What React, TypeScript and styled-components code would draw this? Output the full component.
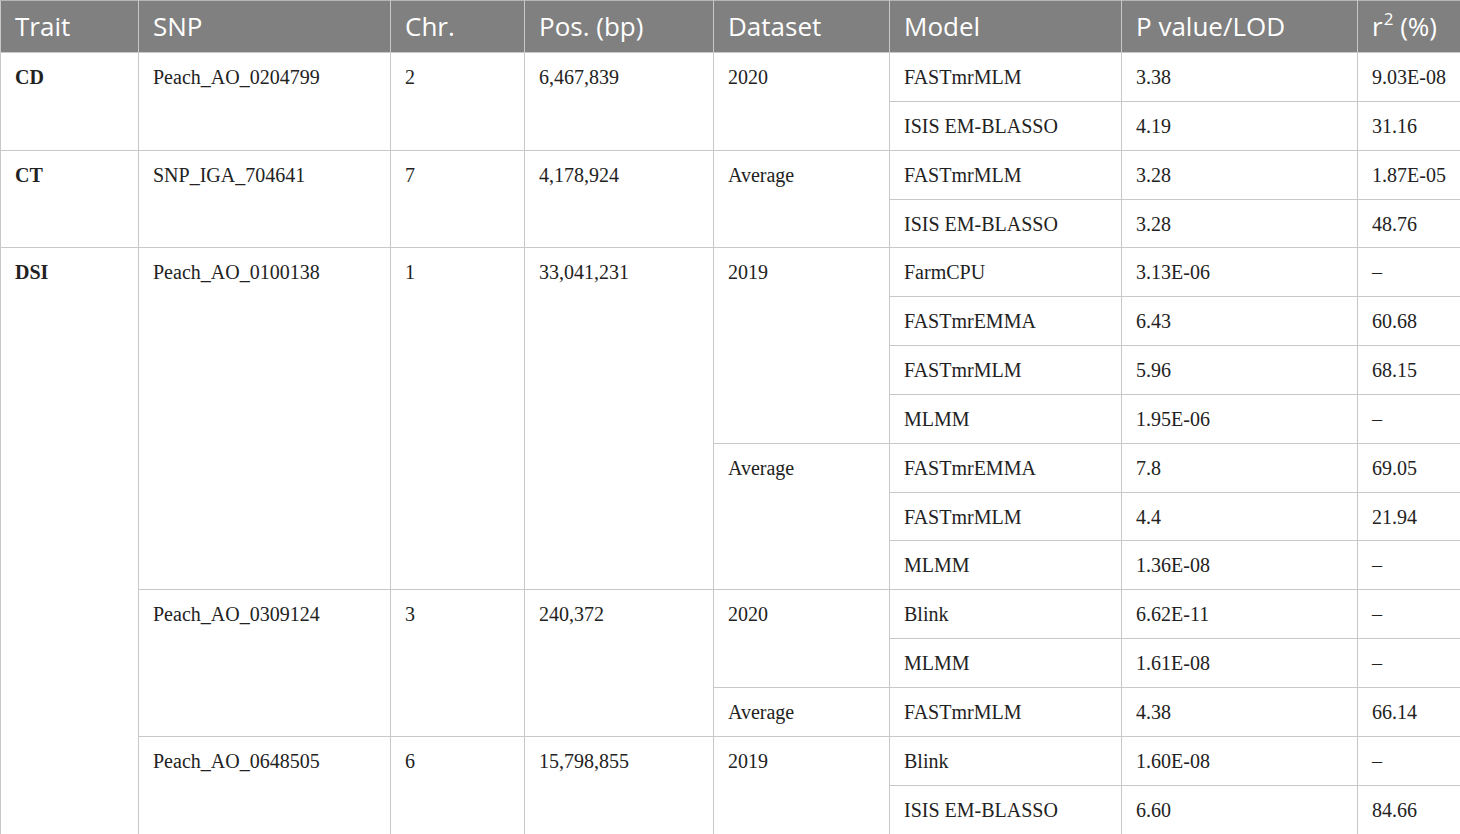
import React from "react";
import styled, { createGlobalStyle } from "styled-components";

const Global = createGlobalStyle`
  html, body { margin: 0; padding: 0; background: #ffffff; }
  #root { width: 1460px; height: 834px; overflow: hidden; }
`;

const Table = styled.table`
  width: 1460px;
  border-collapse: collapse;
  table-layout: fixed;
  font-family: "Liberation Serif", "Times New Roman", serif;
  color: #222;
`;

const HeadRow = styled.tr`
  height: 52px;
  background: #808080;
`;

const HeadCell = styled.th`
  font-family: "Open Sans", "Noto Sans", sans-serif;
  font-weight: 400;
  font-size: 26px;
  color: #ffffff;
  text-align: left;
  padding: 0 0 2px 14px;
  border: 1px solid #c8c8c8;
  border-top-color: #b5b5b5;
  vertical-align: middle;
  white-space: nowrap;
`;

const Sup = styled.sup`
  font-size: 17px;
  vertical-align: 11px;
  line-height: 0;
  margin-left: 1px;
`;

const BodyRow = styled.tr`
  height: 48.85px;
`;

const Cell = styled.td<{ $bold?: boolean }>`
  font-size: 20px;
  font-weight: ${(p) => (p.$bold ? 700 : 400)};
  text-align: left;
  vertical-align: top;
  padding: 12px 0 0 14px;
  border: 1px solid #c8c8c8;
  white-space: nowrap;
  line-height: 24px;
`;

type C = { t: string; rs?: number; b?: boolean };
const rows: C[][] = [
  [{ t: "CD", rs: 2, b: true }, { t: "Peach_AO_0204799", rs: 2 }, { t: "2", rs: 2 }, { t: "6,467,839", rs: 2 }, { t: "2020", rs: 2 }, { t: "FASTmrMLM" }, { t: "3.38" }, { t: "9.03E-08" }],
  [{ t: "ISIS EM-BLASSO" }, { t: "4.19" }, { t: "31.16" }],
  [{ t: "CT", rs: 2, b: true }, { t: "SNP_IGA_704641", rs: 2 }, { t: "7", rs: 2 }, { t: "4,178,924", rs: 2 }, { t: "Average", rs: 2 }, { t: "FASTmrMLM" }, { t: "3.28" }, { t: "1.87E-05" }],
  [{ t: "ISIS EM-BLASSO" }, { t: "3.28" }, { t: "48.76" }],
  [{ t: "DSI", rs: 12, b: true }, { t: "Peach_AO_0100138", rs: 7 }, { t: "1", rs: 7 }, { t: "33,041,231", rs: 7 }, { t: "2019", rs: 4 }, { t: "FarmCPU" }, { t: "3.13E-06" }, { t: "–" }],
  [{ t: "FASTmrEMMA" }, { t: "6.43" }, { t: "60.68" }],
  [{ t: "FASTmrMLM" }, { t: "5.96" }, { t: "68.15" }],
  [{ t: "MLMM" }, { t: "1.95E-06" }, { t: "–" }],
  [{ t: "Average", rs: 3 }, { t: "FASTmrEMMA" }, { t: "7.8" }, { t: "69.05" }],
  [{ t: "FASTmrMLM" }, { t: "4.4" }, { t: "21.94" }],
  [{ t: "MLMM" }, { t: "1.36E-08" }, { t: "–" }],
  [{ t: "Peach_AO_0309124", rs: 3 }, { t: "3", rs: 3 }, { t: "240,372", rs: 3 }, { t: "2020", rs: 2 }, { t: "Blink" }, { t: "6.62E-11" }, { t: "–" }],
  [{ t: "MLMM" }, { t: "1.61E-08" }, { t: "–" }],
  [{ t: "Average" }, { t: "FASTmrMLM" }, { t: "4.38" }, { t: "66.14" }],
  [{ t: "Peach_AO_0648505", rs: 2 }, { t: "6", rs: 2 }, { t: "15,798,855", rs: 2 }, { t: "2019", rs: 2 }, { t: "Blink" }, { t: "1.60E-08" }, { t: "–" }],
  [{ t: "ISIS EM-BLASSO" }, { t: "6.60" }, { t: "84.66" }],
];

const widths = [138, 252, 134, 189, 176, 232, 236, 103];

export default function App() {
  return (
    <>
      <Global />
      <Table>
        <colgroup>
          {widths.map((w, i) => (
            <col key={i} style={{ width: w }} />
          ))}
        </colgroup>
        <thead>
          <HeadRow>
            <HeadCell>Trait</HeadCell>
            <HeadCell>SNP</HeadCell>
            <HeadCell>Chr.</HeadCell>
            <HeadCell>Pos. (bp)</HeadCell>
            <HeadCell>Dataset</HeadCell>
            <HeadCell>Model</HeadCell>
            <HeadCell>P value/LOD</HeadCell>
            <HeadCell>
              r<Sup>2</Sup> (%)
            </HeadCell>
          </HeadRow>
        </thead>
        <tbody>
          {rows.map((r, i) => (
            <BodyRow key={i}>
              {r.map((c, j) => (
                <Cell key={j} rowSpan={c.rs} $bold={c.b}>
                  {c.t}
                </Cell>
              ))}
            </BodyRow>
          ))}
        </tbody>
      </Table>
    </>
  );
}
